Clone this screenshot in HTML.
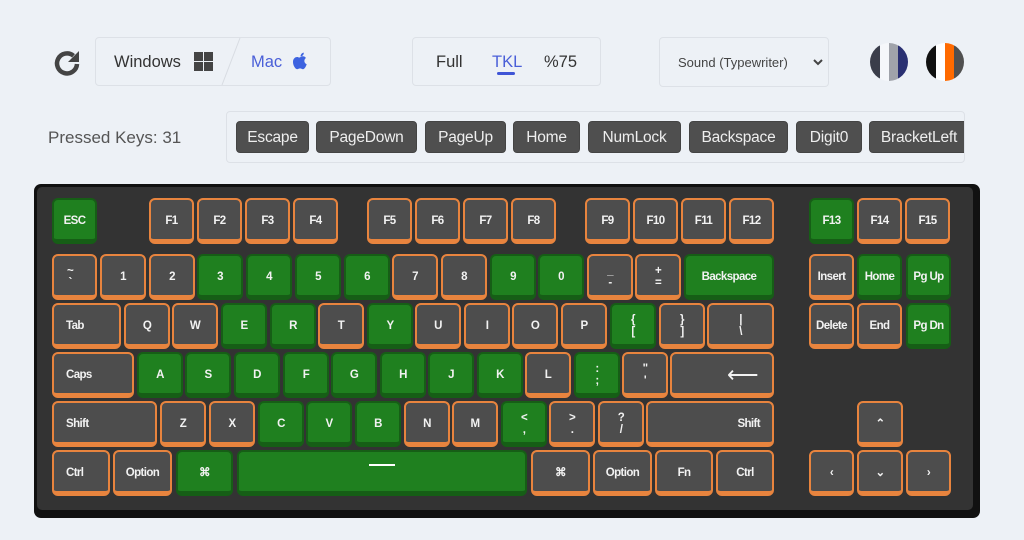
<!DOCTYPE html>
<html><head><meta charset="utf-8"><style>
*{box-sizing:border-box;margin:0;padding:0}
body{width:1024px;height:540px;background:#edf1f6;font-family:"Liberation Sans",sans-serif;position:relative;overflow:hidden}
.a{position:absolute}
.box{position:absolute;border:1px solid #dde1e7;border-radius:4px;background:#edf1f6}
.tag{position:absolute;top:121px;height:32px;background:#4f4f4f;color:#eee;border-radius:4px;font-size:15.5px;line-height:31px;text-align:center;border:1px solid #444;letter-spacing:-0.2px}
.kb{position:absolute;left:34px;top:184px;width:946px;height:334px;background:#111;border-radius:7px}
.kbi{position:absolute;left:3px;top:3px;width:936px;height:323px;background:#333;border-radius:5px}
.k,.g{position:absolute;height:46px;border-radius:6px;border:2px solid #e8843e;border-bottom-width:5px;background:#4d4d4d;color:#f2f2f2;font-weight:bold;font-size:11.5px;letter-spacing:-0.6px;display:flex;align-items:center;justify-content:center;text-align:center;line-height:12px;padding-top:2px}
.g{background:#1f801f;border-color:#165e16}
.l{justify-content:flex-start;padding-left:12px}
.r{justify-content:flex-end;padding-right:12px}
.n{font-size:16.5px;color:#333}
</style></head><body>
<svg class="a" style="left:52px;top:47px" width="32" height="32" viewBox="0 0 32 32"><path d="M25 17a10 10 0 1 1-3.5-8.2" fill="none" stroke="#444" stroke-width="4.5"/><path d="M27 4v11h-11z" fill="#444"/></svg>
<div class="box" style="left:95px;top:37px;width:236px;height:49px"></div>
<svg class="a" style="left:216px;top:37px" width="28" height="49"><line x1="24" y1="1" x2="6" y2="48" stroke="#d8dce2" stroke-width="1"/></svg>
<div class="a n" style="left:114px;top:53px">Windows</div>
<svg class="a" style="left:194px;top:52px" width="19" height="19"><rect x="0" y="0" width="9" height="9" fill="#444"/><rect x="10" y="0" width="9" height="9" fill="#444"/><rect x="0" y="10" width="9" height="9" fill="#444"/><rect x="10" y="10" width="9" height="9" fill="#444"/></svg>
<div class="a n" style="left:251px;top:53px;color:#4a5fd8">Mac</div>
<svg class="a" style="left:292px;top:52px" width="17" height="20" viewBox="0 0 17 20"><path d="M8.5 5c1.5-1 4-1.3 5.5 1-2.5 1.6-2 5.2.7 6.2-.8 2.300-2.2 5-3.8 5-1.3 0-1.6-.8-2.8-.8s-1.7.8-2.9.8C3.4 17.2 1 13.5 1 10c0-4 3.2-5.5 5.2-4.8 1 .3 1.6.6 2.3-.2z" fill="#3d63e0"/><path d="M8.5 4.5C8.4 2.5 10 .8 11.8.6c.1 2-1.5 3.8-3.3 3.9z" fill="#3d63e0"/></svg>

<div class="box" style="left:412px;top:37px;width:189px;height:49px"></div>
<div class="a n" style="left:436px;top:53px">Full</div>
<div class="a n" style="left:492px;top:53px;color:#4a5fd8">TKL</div>
<div class="a" style="left:497px;top:72px;width:18px;height:3px;background:#3f55d6;border-radius:2px"></div>
<div class="a n" style="left:544px;top:53px">%75</div>

<div class="box" style="left:659px;top:37px;width:170px;height:50px"></div>
<div class="a" style="left:678px;top:55px;font-size:13px;color:#444">Sound (Typewriter)</div>
<svg class="a" style="left:813px;top:59px" width="10" height="7"><path d="M1 1l4 4 4-4" fill="none" stroke="#444" stroke-width="2"/></svg>

<svg class="a" style="left:870px;top:43px" width="38" height="38"><defs><clipPath id="c1"><circle cx="19" cy="19" r="19"/></clipPath></defs><g clip-path="url(#c1)"><rect x="0" y="0" width="10" height="38" fill="#3a3d4a"/><rect x="10" y="0" width="9" height="38" fill="#f5f7fa"/><rect x="19" y="0" width="9" height="38" fill="#a0a3aa"/><rect x="28" y="0" width="10" height="38" fill="#2a3072"/></g></svg>
<svg class="a" style="left:926px;top:43px" width="38" height="38"><defs><clipPath id="c2"><circle cx="19" cy="19" r="19"/></clipPath></defs><g clip-path="url(#c2)"><rect x="0" y="0" width="10" height="38" fill="#111"/><rect x="10" y="0" width="9" height="38" fill="#fff"/><rect x="19" y="0" width="9" height="38" fill="#ff6a00"/><rect x="28" y="0" width="10" height="38" fill="#505050"/></g></svg>

<div class="a" style="left:48px;top:128px;font-size:17px;color:#555">Pressed Keys: 31</div>
<div class="box" style="left:226px;top:111px;width:739px;height:52px;overflow:hidden"></div>
<div class="a" style="left:226px;top:111px;width:738px;height:52px;overflow:hidden">
<div class="tag" style="left:10px;width:73px;top:10px">Escape</div>
<div class="tag" style="left:90px;width:101px;top:10px">PageDown</div>
<div class="tag" style="left:199px;width:81px;top:10px">PageUp</div>
<div class="tag" style="left:287px;width:67px;top:10px">Home</div>
<div class="tag" style="left:362px;width:93px;top:10px">NumLock</div>
<div class="tag" style="left:463px;width:99px;top:10px">Backspace</div>
<div class="tag" style="left:570px;width:66px;top:10px">Digit0</div>
<div class="tag" style="left:643px;width:100px;top:10px">BracketLeft</div>
</div>

<div class="kb"><div class="kbi"></div></div>
<div class="g" style="left:52px;top:198px;width:45px">ESC</div>
<div class="k" style="left:149px;top:198px;width:45px">F1</div>
<div class="k" style="left:197px;top:198px;width:45px">F2</div>
<div class="k" style="left:245px;top:198px;width:45px">F3</div>
<div class="k" style="left:293px;top:198px;width:45px">F4</div>
<div class="k" style="left:367px;top:198px;width:45px">F5</div>
<div class="k" style="left:415px;top:198px;width:45px">F6</div>
<div class="k" style="left:463px;top:198px;width:45px">F7</div>
<div class="k" style="left:511px;top:198px;width:45px">F8</div>
<div class="k" style="left:585px;top:198px;width:45px">F9</div>
<div class="k" style="left:633px;top:198px;width:45px">F10</div>
<div class="k" style="left:681px;top:198px;width:45px">F11</div>
<div class="k" style="left:729px;top:198px;width:45px">F12</div>
<div class="g" style="left:809px;top:198px;width:45px">F13</div>
<div class="k" style="left:857px;top:198px;width:45px">F14</div>
<div class="k" style="left:905px;top:198px;width:45px">F15</div>
<div class="k" style="left:52px;top:254px;width:45px;justify-content:flex-start;padding-left:13px">~<br>`</div>
<div class="k" style="left:100px;top:254px;width:46px">1</div>
<div class="k" style="left:149px;top:254px;width:46px">2</div>
<div class="g" style="left:197px;top:254px;width:46px">3</div>
<div class="g" style="left:246px;top:254px;width:46px">4</div>
<div class="g" style="left:295px;top:254px;width:46px">5</div>
<div class="g" style="left:344px;top:254px;width:46px">6</div>
<div class="k" style="left:392px;top:254px;width:46px">7</div>
<div class="k" style="left:441px;top:254px;width:46px">8</div>
<div class="g" style="left:490px;top:254px;width:46px">9</div>
<div class="g" style="left:538px;top:254px;width:46px">0</div>
<div class="k" style="left:587px;top:254px;width:46px">_<br>-</div>
<div class="k" style="left:635px;top:254px;width:46px">+<br>=</div>
<div class="g" style="left:684px;top:254px;width:90px">Backspace</div>
<div class="k" style="left:809px;top:254px;width:45px">Insert</div>
<div class="g" style="left:857px;top:254px;width:45px">Home</div>
<div class="g" style="left:906px;top:254px;width:45px">Pg Up</div>
<div class="k l" style="left:52px;top:303px;width:69px">Tab</div>
<div class="k" style="left:124px;top:303px;width:46px">Q</div>
<div class="k" style="left:172px;top:303px;width:46px">W</div>
<div class="g" style="left:221px;top:303px;width:46px">E</div>
<div class="g" style="left:270px;top:303px;width:46px">R</div>
<div class="k" style="left:318px;top:303px;width:46px">T</div>
<div class="g" style="left:367px;top:303px;width:46px">Y</div>
<div class="k" style="left:415px;top:303px;width:46px">U</div>
<div class="k" style="left:464px;top:303px;width:46px">I</div>
<div class="k" style="left:512px;top:303px;width:46px">O</div>
<div class="k" style="left:561px;top:303px;width:46px">P</div>
<div class="g" style="left:610px;top:303px;width:46px">{<br>[</div>
<div class="k" style="left:659px;top:303px;width:46px">}<br>]</div>
<div class="k" style="left:707px;top:303px;width:67px">|<br>\</div>
<div class="k" style="left:809px;top:303px;width:45px">Delete</div>
<div class="k" style="left:857px;top:303px;width:45px">End</div>
<div class="g" style="left:906px;top:303px;width:45px">Pg Dn</div>
<div class="k l" style="left:52px;top:352px;width:82px">Caps</div>
<div class="g" style="left:137px;top:352px;width:46px">A</div>
<div class="g" style="left:185px;top:352px;width:46px">S</div>
<div class="g" style="left:234px;top:352px;width:46px">D</div>
<div class="g" style="left:283px;top:352px;width:46px">F</div>
<div class="g" style="left:331px;top:352px;width:46px">G</div>
<div class="g" style="left:380px;top:352px;width:46px">H</div>
<div class="g" style="left:428px;top:352px;width:46px">J</div>
<div class="g" style="left:477px;top:352px;width:46px">K</div>
<div class="k" style="left:525px;top:352px;width:46px">L</div>
<div class="g" style="left:574px;top:352px;width:46px">:<br>;</div>
<div class="k" style="left:622px;top:352px;width:46px">"<br>'</div>
<div class="k r" style="left:670px;top:352px;width:104px;font-size:22px;font-weight:normal;padding-right:14px">⟵</div>
<div class="k l" style="left:52px;top:401px;width:105px">Shift</div>
<div class="k" style="left:160px;top:401px;width:46px">Z</div>
<div class="k" style="left:209px;top:401px;width:46px">X</div>
<div class="g" style="left:258px;top:401px;width:46px">C</div>
<div class="g" style="left:306px;top:401px;width:46px">V</div>
<div class="g" style="left:355px;top:401px;width:46px">B</div>
<div class="k" style="left:404px;top:401px;width:46px">N</div>
<div class="k" style="left:452px;top:401px;width:46px">M</div>
<div class="g" style="left:501px;top:401px;width:46px">&lt;<br>,</div>
<div class="k" style="left:549px;top:401px;width:46px">&gt;<br>.</div>
<div class="k" style="left:598px;top:401px;width:46px">?<br>/</div>
<div class="k r" style="left:646px;top:401px;width:128px">Shift</div>
<div class="k" style="left:857px;top:401px;width:46px">⌃</div>
<div class="k l" style="left:52px;top:450px;width:58px">Ctrl</div>
<div class="k" style="left:113px;top:450px;width:59px">Option</div>
<div class="g" style="left:176px;top:450px;width:57px">⌘</div>
<div class="g" style="left:237px;top:450px;width:290px;align-items:flex-start;padding-top:12px"><div style="width:26px;height:2px;background:#fff"></div></div>
<div class="k" style="left:531px;top:450px;width:59px">⌘</div>
<div class="k" style="left:593px;top:450px;width:59px">Option</div>
<div class="k" style="left:655px;top:450px;width:58px">Fn</div>
<div class="k" style="left:716px;top:450px;width:58px">Ctrl</div>
<div class="k" style="left:809px;top:450px;width:45px">‹</div>
<div class="k" style="left:857px;top:450px;width:46px">⌄</div>
<div class="k" style="left:906px;top:450px;width:45px">›</div>
</body></html>
